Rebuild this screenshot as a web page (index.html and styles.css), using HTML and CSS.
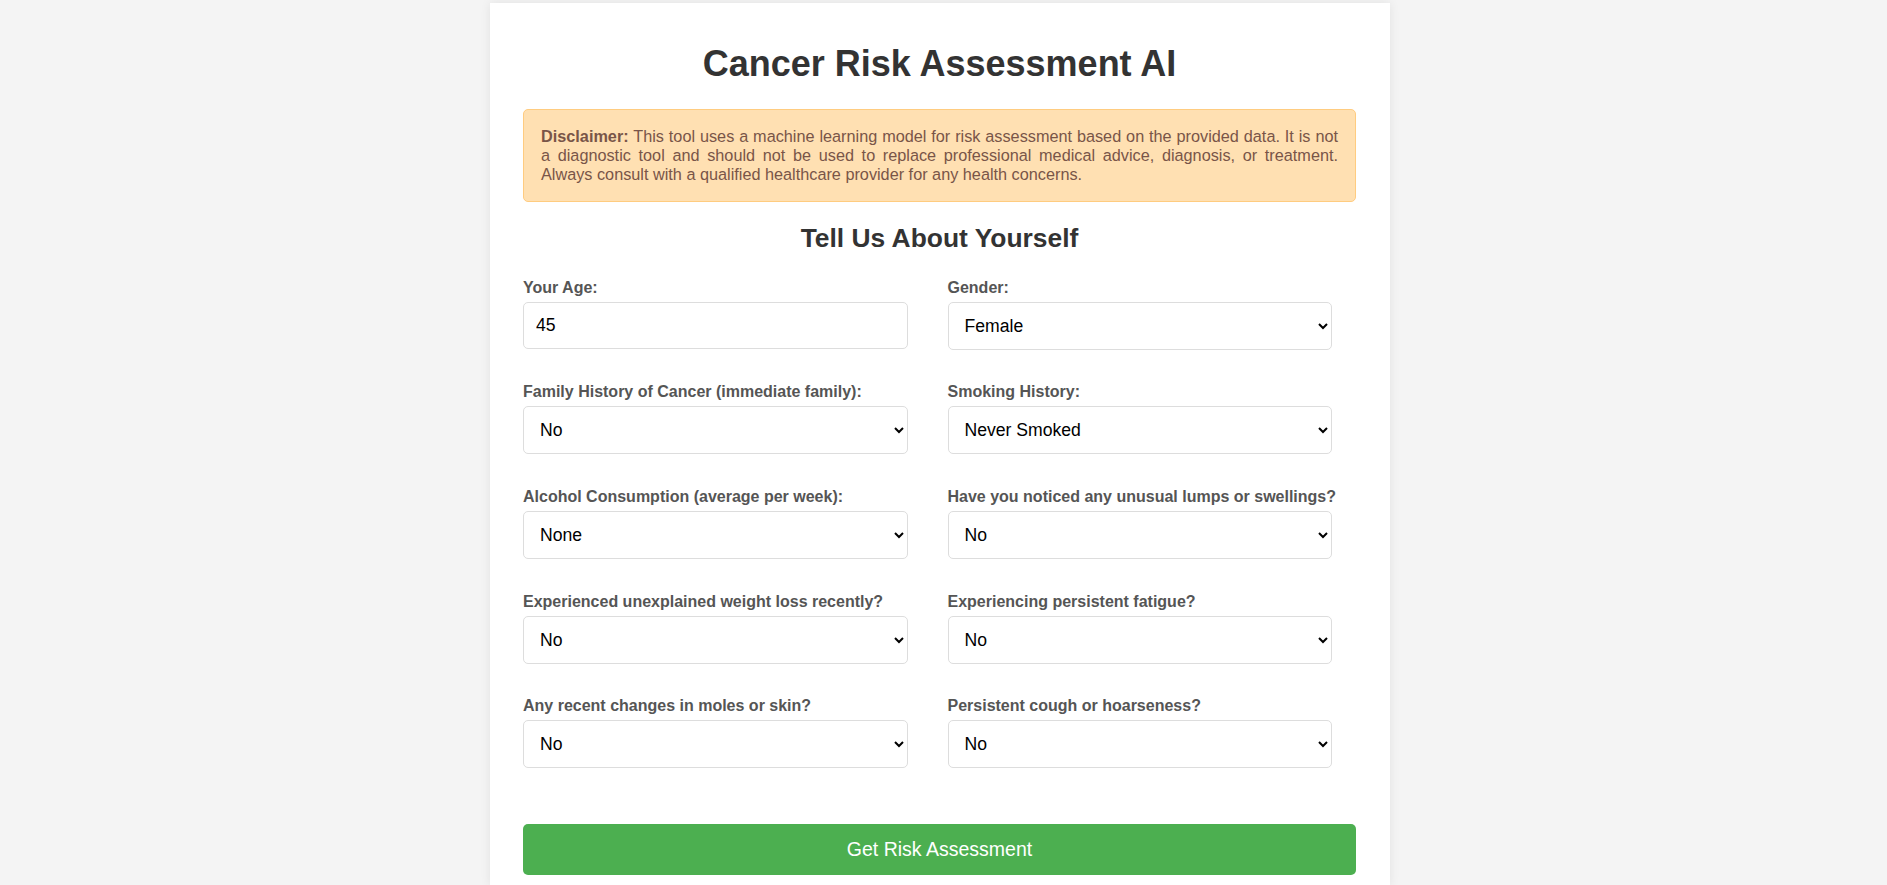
FILE: index.html
```html
<!DOCTYPE html>
<html lang="en">
<head>
<meta charset="utf-8">
<title>Cancer Risk Assessment AI</title>
<link rel="stylesheet" href="styles.css">
</head>
<body>
<div class="container">
  <h1 class="title">Cancer Risk Assessment AI</h1>
  <div class="disclaimer">
    <strong>Disclaimer:</strong> This tool uses a machine learning model for risk assessment based on the provided data. It is not a diagnostic tool and should not be used to replace professional medical advice, diagnosis, or treatment. Always consult with a qualified healthcare provider for any health concerns.
  </div>
  <h2 class="subtitle">Tell Us About Yourself</h2>
  <form class="form">
    <div class="grid">
      <div class="group">
        <label class="label" for="age">Your Age:</label>
        <input class="field" id="age" type="number" value="45">
      </div>
      <div class="group">
        <label class="label" for="gender">Gender:</label>
        <select class="field select" id="gender"><option>Female</option><option>Male</option></select>
      </div>
      <div class="group">
        <label class="label" for="family">Family History of Cancer (immediate family):</label>
        <select class="field select" id="family"><option>No</option><option>Yes</option></select>
      </div>
      <div class="group">
        <label class="label" for="smoking">Smoking History:</label>
        <select class="field select" id="smoking"><option>Never Smoked</option><option>Former Smoker</option><option>Current Smoker</option></select>
      </div>
      <div class="group">
        <label class="label" for="alcohol">Alcohol Consumption (average per week):</label>
        <select class="field select" id="alcohol"><option>None</option><option>Moderate</option><option>Heavy</option></select>
      </div>
      <div class="group">
        <label class="label" for="lumps">Have you noticed any unusual lumps or swellings?</label>
        <select class="field select" id="lumps"><option>No</option><option>Yes</option></select>
      </div>
      <div class="group">
        <label class="label" for="weight">Experienced unexplained weight loss recently?</label>
        <select class="field select" id="weight"><option>No</option><option>Yes</option></select>
      </div>
      <div class="group">
        <label class="label" for="fatigue">Experiencing persistent fatigue?</label>
        <select class="field select" id="fatigue"><option>No</option><option>Yes</option></select>
      </div>
      <div class="group">
        <label class="label" for="moles">Any recent changes in moles or skin?</label>
        <select class="field select" id="moles"><option>No</option><option>Yes</option></select>
      </div>
      <div class="group">
        <label class="label" for="cough">Persistent cough or hoarseness?</label>
        <select class="field select" id="cough"><option>No</option><option>Yes</option></select>
      </div>
    </div>
    <button class="submit" type="button">Get Risk Assessment</button>
  </form>
</div>
</body>
</html>
```
FILE: styles.css
```css
html, body {
  margin: 0;
  padding: 0;
}
body {
  background: #f4f4f4;
  font-family: "Liberation Sans", Arial, sans-serif;
  color: #333;
  padding-right: 7px;
}
.container {
  width: 900px;
  box-sizing: border-box;
  margin: 3px auto 0;
  background: #fff;
  padding: 40px 34px 11px 33px;
  box-shadow: 0 0 10px rgba(0, 0, 0, 0.08);
}
.title {
  margin: 0;
  font-size: 36px;
  line-height: 42px;
  text-align: center;
  color: #333;
  font-weight: bold;
}
.disclaimer {
  margin-top: 24px;
  background: #ffe0b2;
  border: 1px solid #ffcc80;
  border-radius: 5px;
  padding: 16.5px 17px;
  font-size: 16.25px;
  line-height: 19.2px;
  color: #795548;
  text-align: justify;
}
.subtitle {
  margin: 21px 0 25px;
  font-size: 26.4px;
  line-height: normal;
  text-align: center;
  color: #333;
}
.form {
  margin: 0;
}
.grid {
  display: grid;
  grid-template-columns: 1fr 1fr;
  column-gap: 16px;
  row-gap: 33.7px;
}
.group {
  display: flex;
  flex-direction: column;
}
.label {
  display: block;
  font-weight: bold;
  font-size: 16px;
  line-height: normal;
  color: #555;
  margin-bottom: 5px;
}
.field {
  box-sizing: border-box;
  width: calc(100% - 24px);
  padding: 12px;
  border: 1px solid #ddd;
  border-radius: 5px;
  font-family: "Liberation Sans", Arial, sans-serif;
  font-size: 17.6px;
  line-height: normal;
  color: #000;
  background: #fff;
}
.submit {
  display: block;
  width: 100%;
  margin-top: 56px;
  padding: 14px;
  border: none;
  border-radius: 5px;
  background: #4caf50;
  color: #fff;
  font-family: "Liberation Sans", Arial, sans-serif;
  font-size: 19.5px;
  line-height: normal;
  cursor: pointer;
}
```
